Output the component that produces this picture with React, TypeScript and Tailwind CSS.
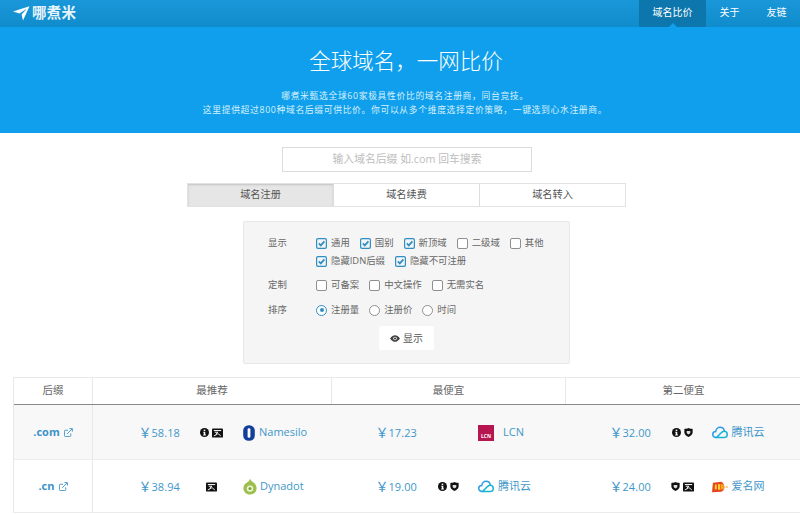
import React from "react";

function Check({ on, label }: { on?: boolean; label: string }) {
  return (
    <span className="flex items-center gap-[4px]">
      <span className={on ? "flex h-[11px] w-[11px] items-center justify-center rounded-[2px] bg-[#2f8fc4]" : "h-[11px] w-[11px] rounded-[2px] border border-[#8f8f8f] bg-white"}>
        {on && (
          <svg viewBox="0 0 11 11" className="h-[11px] w-[11px]">
            <rect x="1.2" y="1.2" width="8.6" height="8.6" rx="1" fill="#f4f4f4" />
            <path d="M2.8 5.4 L4.8 7.4 L8.4 3.4" fill="none" stroke="#2f8fc4" strokeWidth="1.7" />
          </svg>
        )}
      </span>
      <span>{label}</span>
    </span>
  );
}

function Radio({ on, label }: { on?: boolean; label: string }) {
  return (
    <span className="flex items-center gap-[4px]">
      <span className={on ? "flex h-[11px] w-[11px] items-center justify-center rounded-full border border-[#2f8fc4] bg-white" : "h-[11px] w-[11px] rounded-full border border-[#8f8f8f] bg-white"}>
        {on && <span className="h-[4px] w-[4px] rounded-full bg-[#2f8fc4]" />}
      </span>
      <span>{label}</span>
    </span>
  );
}

function InfoIcon() {
  return (
    <svg viewBox="0 0 10 10" className="h-[9px] w-[9px]">
      <circle cx="5" cy="5" r="5" fill="#111" />
      <rect x="4.1" y="1.8" width="1.8" height="1.5" fill="#fff" />
      <path d="M3.6 4.2H5.9V7.3H6.6V8.3H3.5V7.3H4.2V5.2H3.6Z" fill="#fff" />
    </svg>
  );
}
function IdIcon() {
  return (
    <svg viewBox="0 0 12 10" className="h-[10px] w-[11px]">
      <rect width="12" height="10" rx="1" fill="#111" />
      <rect x="2" y="1.8" width="8" height="1.1" fill="#fff" />
      <path d="M3 4.2H6.5L4 6.4M6 5.2L9.6 8.2M2 8.2L6 6.2" fill="none" stroke="#fff" strokeWidth="1" />
    </svg>
  );
}
function ShieldIcon() {
  return (
    <svg viewBox="0 0 10 10" className="h-[9px] w-[9px]">
      <path d="M5 0 C6.6 .8 8.2 1 9.6 1 V5 C9.6 7.5 7 9.2 5 10 C3 9.2 .4 7.5 .4 5 V1 C1.8 1 3.4 .8 5 0Z" fill="#111" />
      <path d="M3 3.2H7V5.4C7 6.2 5.8 6.9 5 7.2C4.2 6.9 3 6.2 3 5.4Z" fill="#ddd" />
    </svg>
  );
}
function ExtIcon() {
  return (
    <svg viewBox="0 0 10 10" className="h-[9px] w-[9px]" fill="none" stroke="#3a93c6" strokeWidth="1">
      <path d="M7.5 6V8.5A1 1 0 0 1 6.5 9.5H1.5A1 1 0 0 1 .5 8.5V3.5A1 1 0 0 1 1.5 2.5H4.5" />
      <path d="M3.5 6.5L9 1M6 .7H9.3V4" />
    </svg>
  );
}

function Namesilo() {
  return (
    <svg viewBox="0 0 12 16" className="h-[16px] w-[12px]">
      <rect x=".2" y=".2" width="11.6" height="15.6" rx="5.4" fill="#123f9c" />
      <rect x="4.6" y="3.2" width="2.8" height="9.6" rx="1.4" fill="#fff" />
    </svg>
  );
}
function Dynadot() {
  return (
    <svg viewBox="0 0 14 17" className="h-[17px] w-[14px]">
      <path d="M7 .5C7.4 2.5 9 3.2 10.6 4.6C12.6 6 13.6 8 13.6 10.3C13.6 14 10.8 16.6 7 16.6C3.2 16.6.4 14 .4 10.3C.4 7.6 2 5.6 4 4.6C5.6 3.7 6.6 2.4 7 .5Z" fill="#9cbf4e" />
      <circle cx="7" cy="10.6" r="3.2" fill="#eef3d6" />
      <circle cx="7" cy="10.6" r="1.5" fill="#7aa23a" />
    </svg>
  );
}
function Tencent() {
  return (
    <svg viewBox="0 0 17 13" className="h-[13px] w-[16px]" fill="none">
      <path d="M4.4 11.8C2.2 11.8 .8 10.4 .8 8.6C.8 6.8 2.2 5.5 4 5.5C4.2 3 6.2 1 8.6 1C10.8 1 12.6 2.5 13 4.6" stroke="#2f9be8" strokeWidth="1.6" strokeLinecap="round" />
      <path d="M4.4 11.8H12.6C14.6 11.8 16.2 10.4 16.2 8.5C16.2 6.6 14.7 5.2 12.8 5.2C11 5.2 9.8 6.5 8.2 8.3C7 9.6 6 10.6 4.4 11.8Z" stroke="#18b4d8" strokeWidth="1.6" strokeLinejoin="round" />
    </svg>
  );
}
function Aiming() {
  return (
    <svg viewBox="0 0 17 12" className="h-[12px] w-[16px]">
      <path d="M1 1.5L10 0.5C12 2 13 3.5 13.2 6C13 8.5 12 10 10 11L0 11.5Z" fill="#e8451f" />
      <path d="M9 2.5L12.8 3.5L13 8L9 9Z" fill="#f5a21e" />
      <rect x="3" y="3.5" width="2" height="5" fill="#ffd83a" />
      <rect x="6.4" y="3" width="2" height="6" fill="#ffd83a" />
      <rect x="14.5" y="5.4" width="2.4" height="1.2" fill="#f0a23c" />
    </svg>
  );
}

function Badge({ kind }: { kind: string }) {
  if (kind === "i") return <InfoIcon />;
  if (kind === "d") return <IdIcon />;
  return <ShieldIcon />;
}

function Offer({ price, badges, logo, name, gapName, className }: { price: string; badges: string[]; logo: React.ReactNode; name: string; gapName: string; className: string }) {
  return (
    <div className={`flex items-center pt-[1px] ${className}`}>
      <span className="flex w-[40px] items-baseline justify-end whitespace-nowrap text-[11px] text-[#3f97c9]">
        <span className="text-[13px]">￥</span>
        <span className="tracking-[0.1px]">{price}</span>
      </span>
      <span className="ml-[19.5px] flex w-[24px] items-center justify-center gap-[3px]">
        {badges.map((b, i) => <Badge key={i} kind={b} />)}
      </span>
      <span className={`flex items-center ${gapName} whitespace-nowrap text-[11px] text-[#3f97c9]`}>
        {logo}
        <span>{name}</span>
      </span>
    </div>
  );
}

export default function App() {
  return (
    <div className="h-[514px] w-[800px] overflow-hidden bg-white text-[#555]" style={{ fontFamily: '"Open Sans","Noto Sans CJK SC",sans-serif' }}>
      <header className="flex h-[27px] items-stretch justify-between bg-gradient-to-b from-[#1a97d9] to-[#0f8ccb] text-white">
        <div className="flex items-center gap-[2px] pl-[13px]">
          <svg viewBox="0 0 17 15" className="h-[15px] w-[17px]">
            <path d="M0 5.5L16.5 .3L10 14.5L8.6 8.4L14 2.4L6.5 7.4Z" fill="#fff" />
          </svg>
          <span className="text-[14.5px] font-bold leading-none tracking-[0.2px] text-[#e6f5fc]">哪煮米</span>
        </div>
        <nav className="flex text-[10px]">
          <div className="relative flex w-[67px] items-center justify-center bg-[#0c76ad] pb-[2px]">
            域名比价
            <span className="absolute bottom-0 left-1/2 h-0 w-0 -translate-x-1/2 border-x-[4px] border-b-[4px] border-x-transparent border-b-[#0f9fec]" />
          </div>
          <div className="flex w-[47px] items-center justify-center pb-[2px]">关于</div>
          <div className="flex w-[47px] items-center justify-center pb-[2px]">友链</div>
        </nav>
      </header>

      <section className="flex h-[106px] flex-col items-center bg-[#0f9fec] pl-[10px] pt-[18px] text-white">
        <h1 className="pl-[2px] text-[21.5px] leading-[32px] font-light">全球域名，一网比价</h1>
        <p className="mt-[12px] text-center text-[8.8px] leading-[14px] tracking-[0.65px] text-[#d8f0fc]">
          哪煮米甄选全球60家极具性价比的域名注册商，同台竞技。<br />
          这里提供超过800种域名后缀可供比价。你可以从多个维度选择定价策略，一键选到心水注册商。
        </p>
      </section>

      <div className="ml-[282px] mt-[14px] flex h-[25px] w-[250px] items-center justify-center border border-[#dcdcdc] bg-white text-[10.8px] text-[#bdbdbd]">
        输入域名后缀 如.com 回车搜索
      </div>

      <div className="ml-[187px] mt-[11px] flex h-[24px] w-[439px] border border-[#e2e2e2] text-[10.2px] text-[#555]">
        <div className="flex w-[145px] items-center justify-center bg-[#e6e6e6] shadow-[inset_0_1px_2px_rgba(0,0,0,0.15)]">域名注册</div>
        <div className="flex w-[147px] items-center justify-center border-x border-[#dcdcdc]">域名续费</div>
        <div className="flex flex-1 items-center justify-center">域名转入</div>
      </div>

      <div className="ml-[243px] mt-[14px] h-[143px] w-[327px] rounded-[2px] border border-[#e8e8e8] bg-[#f5f5f5] pl-[24px] pt-[12px] text-[9.4px] leading-[18px] text-[#666]">
        <div className="flex">
          <span className="w-[48px]">显示</span>
          <div className="flex flex-col">
            <div className="flex gap-[10px]">
              <Check on label="通用" />
              <Check on label="国别" />
              <Check on label="新顶域" />
              <Check label="二级域" />
              <Check label="其他" />
            </div>
            <div className="flex gap-[10px]">
              <Check on label="隐藏IDN后缀" />
              <Check on label="隐藏不可注册" />
            </div>
          </div>
        </div>
        <div className="mt-[6px] flex">
          <span className="w-[48px]">定制</span>
          <div className="flex gap-[10px]">
            <Check label="可备案" />
            <Check label="中文操作" />
            <Check label="无需实名" />
          </div>
        </div>
        <div className="mt-[7px] flex">
          <span className="w-[48px]">排序</span>
          <div className="flex gap-[10px]">
            <Radio on label="注册量" />
            <Radio label="注册价" />
            <Radio label="时间" />
          </div>
        </div>
        <div className="ml-[111px] mt-[7px] flex h-[24px] w-[55px] items-center justify-center gap-[3px] rounded-[2px] bg-white text-[10px] text-[#555]">
          <svg viewBox="0 0 12 8" className="h-[7px] w-[10px]">
            <path d="M0 4C2 1.2 4 0 6 0S10 1.2 12 4C10 6.8 8 8 6 8S2 6.8 0 4Z" fill="#444" />
            <circle cx="6" cy="4" r="2.2" fill="#eee" />
            <circle cx="6" cy="4" r="1.2" fill="#333" />
          </svg>
          显示
        </div>
      </div>

      <div className="ml-[13px] mt-[13px] w-[787px] border-l border-t border-[#e8e8e8] text-[#666]">
        <div className="grid h-[27px] grid-cols-[79px_239px_234px_235px] border-b border-[#888] text-[10.5px]">
          <div className="flex items-center justify-center border-r border-[#e8e8e8]">后缀</div>
          <div className="flex items-center justify-center border-r border-[#e8e8e8]">最推荐</div>
          <div className="flex items-center justify-center border-r border-[#e8e8e8]">最便宜</div>
          <div className="flex items-center justify-center">第二便宜</div>
        </div>
        <div className="grid h-[55px] grid-cols-[79px_239px_234px_235px] border-b border-[#ededed] bg-[#f8f8f8]">
          <div className="flex items-center justify-center gap-[4px] border-r border-[#e8e8e8] pt-[1px] text-[11px] font-bold text-[#3a93c6]">.com <ExtIcon /></div>
          <Offer className="pl-[47px]" price="58.18" badges={["i", "d"]} logo={<Namesilo />} name="Namesilo" gapName="ml-[19.5px] gap-[4px]" />
          <Offer className="pl-[45px]" price="17.23" badges={[]} logo={<span className="flex h-[16px] w-[16px] items-end justify-center bg-[#b6164f] pb-[2px] text-[5px] font-bold leading-none text-white">LCN</span>} name="LCN" gapName="ml-[17.5px] gap-[9px]" />
          <Offer className="pl-[45px]" price="32.00" badges={["i", "s"]} logo={<Tencent />} name="腾讯云" gapName="ml-[17px] gap-[4px]" />
        </div>
        <div className="grid h-[53px] grid-cols-[79px_239px_234px_235px] border-b border-[#ededed]">
          <div className="flex items-center justify-center gap-[4px] border-r border-[#e8e8e8] pt-[1px] text-[11px] font-bold text-[#3a93c6]">.cn <ExtIcon /></div>
          <Offer className="pl-[47px]" price="38.94" badges={["d"]} logo={<Dynadot />} name="Dynadot" gapName="ml-[19.5px] gap-[3px]" />
          <Offer className="pl-[45px]" price="19.00" badges={["i", "s"]} logo={<Tencent />} name="腾讯云" gapName="ml-[17.5px] gap-[4px]" />
          <Offer className="pl-[45px]" price="24.00" badges={["s", "d"]} logo={<Aiming />} name="爱名网" gapName="ml-[17px] gap-[4px]" />
        </div>
      </div>
    </div>
  );
}
